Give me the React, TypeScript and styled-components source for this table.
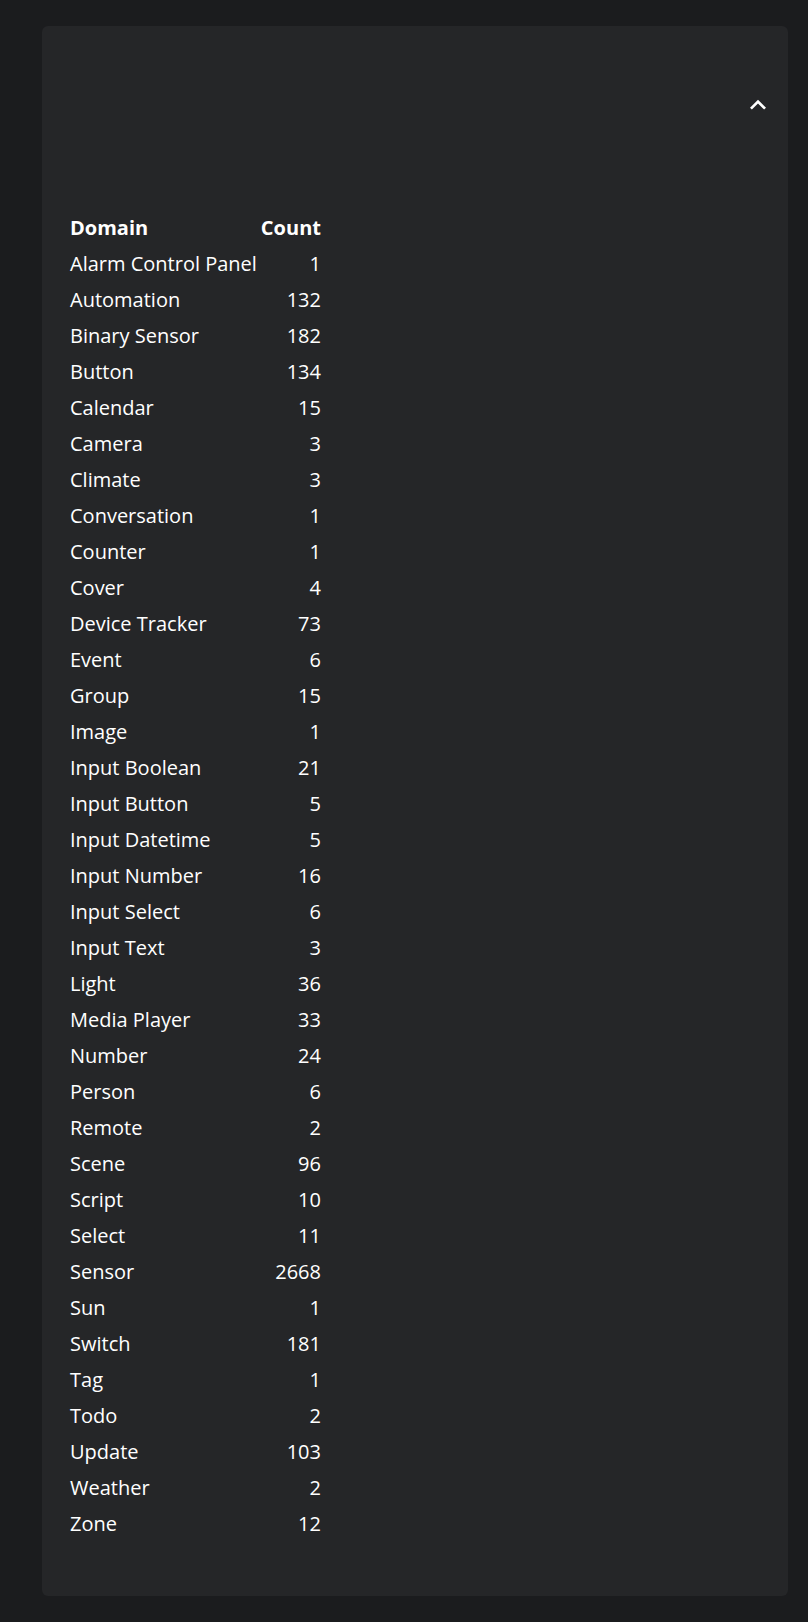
import React from "react";
import styled, { createGlobalStyle } from "styled-components";

const GlobalStyle = createGlobalStyle`
  html, body {
    margin: 0;
    padding: 0;
    background: #1b1c1e;
  }
  body {
    font-family: "Open Sans", "Noto Sans", "DejaVu Sans", sans-serif;
    color: #ffffff;
  }
`;

const Page = styled.div`
  box-sizing: border-box;
  min-height: 1622px;
  padding: 26px 20px 26px 42px;
  background: #1b1c1e;
`;

const Card = styled.section`
  box-sizing: border-box;
  height: 1570px;
  background: #252628;
  border-radius: 6px;
  display: flex;
  flex-direction: column;
`;

const CardHeader = styled.header`
  display: flex;
  justify-content: flex-end;
  padding: 63px 14px 0 0;
`;

const ToggleButton = styled.button`
  width: 32px;
  height: 32px;
  padding: 0;
  border: none;
  background: transparent;
  color: #ffffff;
  cursor: pointer;
  display: flex;
  align-items: center;
  justify-content: center;

  svg {
    width: 32px;
    height: 32px;
    display: block;
  }
`;

const Table = styled.div`
  display: grid;
  grid-template-columns: auto auto;
  column-gap: 4px;
  justify-content: start;
  margin: 89px 0 0 28px;
  font-size: 20px;
  line-height: 36px;
`;

const Cell = styled.div<{ $numeric?: boolean; $head?: boolean }>`
  text-align: ${(p) => (p.$numeric ? "right" : "left")};
  font-weight: ${(p) => (p.$head ? 700 : 400)};
  white-space: nowrap;
`;

const rows: [string, number][] = [
  ["Alarm Control Panel", 1],
  ["Automation", 132],
  ["Binary Sensor", 182],
  ["Button", 134],
  ["Calendar", 15],
  ["Camera", 3],
  ["Climate", 3],
  ["Conversation", 1],
  ["Counter", 1],
  ["Cover", 4],
  ["Device Tracker", 73],
  ["Event", 6],
  ["Group", 15],
  ["Image", 1],
  ["Input Boolean", 21],
  ["Input Button", 5],
  ["Input Datetime", 5],
  ["Input Number", 16],
  ["Input Select", 6],
  ["Input Text", 3],
  ["Light", 36],
  ["Media Player", 33],
  ["Number", 24],
  ["Person", 6],
  ["Remote", 2],
  ["Scene", 96],
  ["Script", 10],
  ["Select", 11],
  ["Sensor", 2668],
  ["Sun", 1],
  ["Switch", 181],
  ["Tag", 1],
  ["Todo", 2],
  ["Update", 103],
  ["Weather", 2],
  ["Zone", 12],
];

const ChevronUp = () => (
  <svg viewBox="0 0 24 24" aria-hidden="true">
    <path
      fill="currentColor"
      d="M7.41,15.41L12,10.83L16.59,15.41L18,14L12,8L6,14L7.41,15.41Z"
    />
  </svg>
);

export default function App() {
  return (
    <>
      <GlobalStyle />
      <Page>
        <Card>
          <CardHeader>
            <ToggleButton aria-label="Collapse">
              <ChevronUp />
            </ToggleButton>
          </CardHeader>
          <Table role="table">
            <Cell $head>Domain</Cell>
            <Cell $head $numeric>
              Count
            </Cell>
            {rows.map(([name, count]) => (
              <React.Fragment key={name}>
                <Cell>{name}</Cell>
                <Cell $numeric>{count}</Cell>
              </React.Fragment>
            ))}
          </Table>
        </Card>
      </Page>
    </>
  );
}
